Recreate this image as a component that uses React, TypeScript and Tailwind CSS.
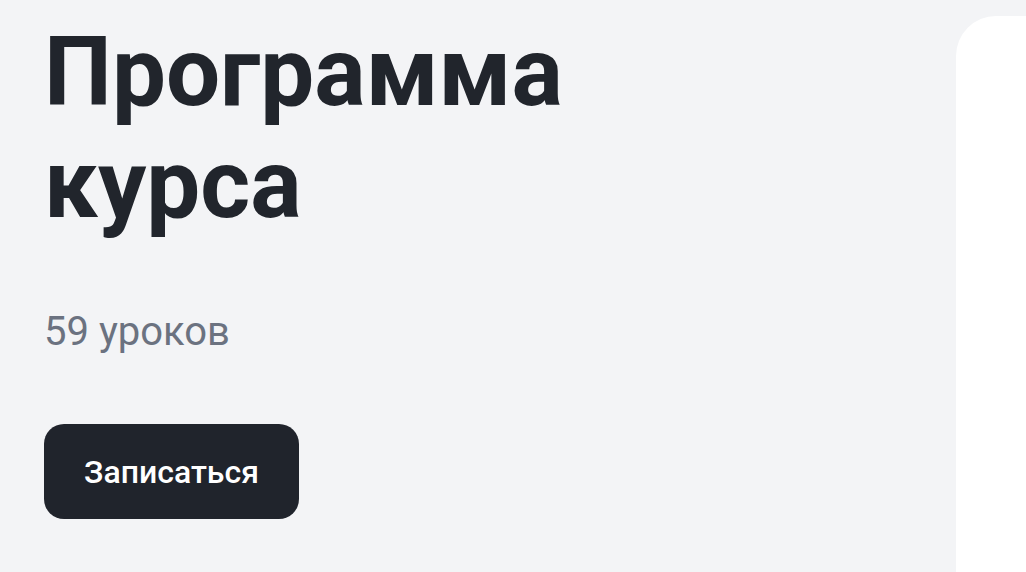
export default function App() {
  return (
    <div className="flex h-[572px] w-full overflow-hidden bg-[#f3f4f6]" style={{ fontFamily: 'Roboto, "Noto Sans", sans-serif' }}>
      <div className="flex w-[956px] shrink-0 flex-col items-start pl-[44px] pt-[16px]">
        <h1 className="text-[96px] font-bold leading-[112px] text-[#21252c]">
          Программа
          <br />
          курса
        </h1>
        <p className="mt-[64px] text-[40px] leading-[56px] text-[#6b7280]">59 уроков</p>
        <button className="mt-[64px] h-[95px] rounded-[20px] bg-[#20242c] px-[40px] text-[32px] font-medium leading-[48px] text-white">
          Записаться
        </button>
      </div>
      <div className="mt-[16px] h-[700px] w-[400px] shrink-0 rounded-[40px] bg-white" />
    </div>
  );
}
